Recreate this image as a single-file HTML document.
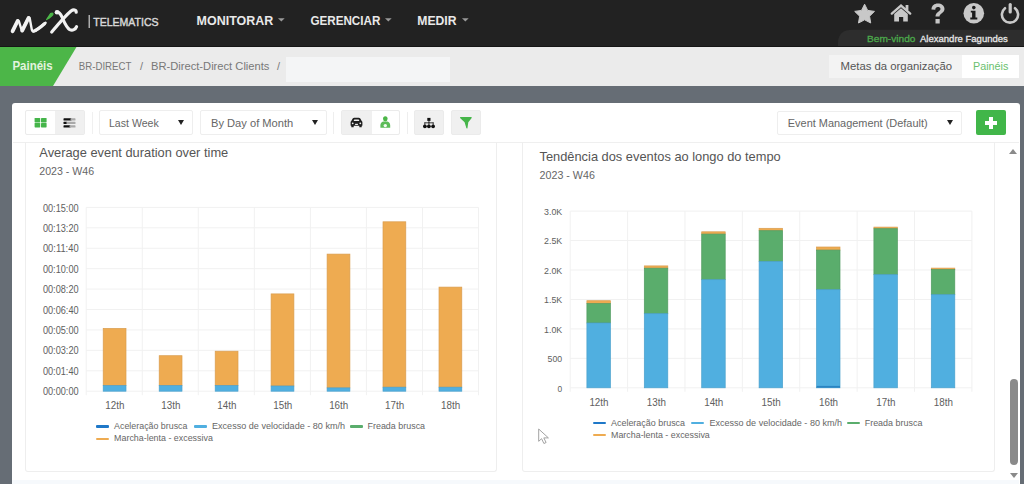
<!DOCTYPE html>
<html><head><meta charset="utf-8">
<style>
*{margin:0;padding:0;box-sizing:border-box}
html,body{width:1024px;height:484px;overflow:hidden;background:#666d75;font-family:"Liberation Sans",sans-serif}
.abs{position:absolute}
.btn{position:absolute;border:1px solid #ebebeb;border-radius:2px}
.dd{position:absolute;background:#fff;border:1px solid #eeeeee;border-radius:2px}
.tri{position:absolute;width:0;height:0;border-left:3.5px solid transparent;border-right:3.5px solid transparent;border-top:5px solid #222}
.mk{position:absolute;height:2.2px;width:13px;border-radius:1px}
svg{position:absolute;overflow:visible}
</style></head><body>
<div class="abs" style="left:0;top:0;width:1024px;height:47px;background:#222222"></div>
<svg style="left:0;top:0" width="180" height="47" viewBox="0 0 180 47">
  <path d="M12.4 31.5 L17.4 21.2 Q18.2 19.8 18.9 21.4 L21.9 31 L28.3 18 Q29.1 16.6 29.7 18.2 L31.8 29.6 Q32.6 32.4 35.5 30.8 L45.6 22.8" fill="none" stroke="#f2f2f2" stroke-width="2.4" stroke-linecap="round" stroke-linejoin="round"/>
  <path d="M12.6 31.2 L17.6 21" fill="none" stroke="#f2f2f2" stroke-width="3.8" stroke-linecap="round"/>
  <path d="M22.2 30.6 L28.5 18" fill="none" stroke="#f2f2f2" stroke-width="3.8" stroke-linecap="round"/>
  <path d="M33.5 31.2 Q37 30.5 44.5 23.8" fill="none" stroke="#f2f2f2" stroke-width="3.2" stroke-linecap="round"/>
  <path d="M46.6 19.6 L50.6 13.6 Q52.6 12.4 53 14 Q52.6 15.8 46.6 19.6 Z" fill="#4cb748" stroke="#4cb748" stroke-width="1.2" stroke-linejoin="round"/>
  <path d="M51.7 32 C58 24.5 65.5 15.5 71 11 C73.5 9.2 76.3 9.6 76.2 12.2" fill="none" stroke="#f2f2f2" stroke-width="3.2" stroke-linecap="round"/>
  <path d="M56.8 12.2 C58.8 11.8 60.6 14 62 17 C64 21.5 66.3 27.5 69.8 29.6 C72.5 31 75.5 29.5 76.6 26.6" fill="none" stroke="#f2f2f2" stroke-width="3.1" stroke-linecap="round"/>
  <circle cx="57" cy="12.3" r="2.3" fill="#f2f2f2"/>
  <rect x="88.6" y="15" width="1.2" height="13" fill="#cfcfcf"/>
</svg>
<svg style="left:0;top:0" width="1024" height="47">
  <path d="M278 18.2 L284.7 18.2 L281.35 21.6 Z" fill="#9a9a9a"/>
  <path d="M385 18.2 L391.7 18.2 L388.35 21.6 Z" fill="#9a9a9a"/>
  <path d="M462 18.2 L468.7 18.2 L465.35 21.6 Z" fill="#9a9a9a"/>
</svg>
<!-- right icons -->
<svg style="left:840px;top:0" width="184" height="47" viewBox="840 0 184 47">
  <path d="M864.60 4.20 L867.66 10.39 L874.49 11.39 L869.55 16.21 L870.71 23.01 L864.60 19.80 L858.49 23.01 L859.65 16.21 L854.71 11.39 L861.54 10.39 Z" fill="#c8c8c8" stroke="#c8c8c8" stroke-width="1" stroke-linejoin="round"/>
  <path d="M891.8 13.6 L901 5.6 L910.2 13.6" fill="none" stroke="#c8c8c8" stroke-width="2.4" stroke-linecap="round" stroke-linejoin="miter"/>
  <rect x="905.6" y="5" width="2.8" height="5.2" fill="#c8c8c8"/>
  <path d="M894.2 14 L901 8.3 L907.8 14 L907.8 21.6 L903.2 21.6 L903.2 17 L899 17 L899 21.6 L894.2 21.6 Z" fill="#c8c8c8"/>
  <path d="M931.5 9.5 C931.5 5.5 934.5 3.5 937.8 3.5 C941.5 3.5 944.5 5.5 944.5 9 C944.5 13 939.5 13.5 939.5 16.5 L935.5 16.5 C935.5 12 940.5 11.5 940.5 9 C940.5 7.5 939.3 7 937.8 7 C936.3 7 935.3 8 935.3 9.8 Z" fill="#c6c6c6"/>
  <rect x="935.5" y="19" width="4.2" height="4.5" fill="#c6c6c6"/>
  <circle cx="973.8" cy="13.3" r="10.3" fill="#c8c8c8"/>
  <circle cx="973.8" cy="7.6" r="1.8" fill="#1a1a1a"/>
  <path d="M970.8 10.8 L975.5 10.8 L975.5 17.4 L977.3 17.4 L977.3 19.5 L970.3 19.5 L970.3 17.4 L972.1 17.4 L972.1 12.6 L970.8 12.6 Z" fill="#1a1a1a"/>
  <path d="M1005 8.2 A8.1 8.1 0 1 0 1015 8.2" fill="none" stroke="#c8c8c8" stroke-width="2.6" stroke-linecap="round"/>
  <rect x="1008.6" y="3" width="3.2" height="10.5" rx="1.5" fill="#c8c8c8"/>
  <path d="M838 47 L838 43 Q838 29.8 853 29.8 L1024 29.8 L1024 47 Z" fill="#2d2d2d"/>
</svg>
<div class="abs" style="left:0;top:45.6px;width:1024px;height:1.5px;background:#161616"></div>
<!-- breadcrumb -->
<div class="abs" style="left:0;top:47px;width:1024px;height:39px;background:#ebebeb"></div>
<svg style="left:0;top:47px" width="80" height="39"><path d="M0 0 L76.5 0 L53 39 L0 39 Z" fill="#4cb648"/></svg>
<div class="abs" style="left:286px;top:57px;width:164px;height:25px;background:#f4f5f6"></div>
<div class="abs" style="left:829px;top:55px;width:133px;height:23px;background:#f3f3f3"></div>
<div class="abs" style="left:962px;top:55px;width:57px;height:23px;background:#ffffff"></div>
<!-- panel -->
<div class="abs" style="left:12px;top:103px;width:1007.5px;height:390px;background:#fff;border-radius:3px"></div>
<!-- toolbar -->
<div class="btn" style="left:25px;top:110px;width:60px;height:25px;background:#fff"></div>
<div class="abs" style="left:55px;top:111px;width:29px;height:23px;background:#f0f0f0"></div>
<svg style="left:0;top:100px" width="100" height="40" viewBox="0 100 100 40">
  <rect x="34.6" y="118" width="5.6" height="4.4" rx="0.6" fill="#45b54a"/><rect x="41" y="118" width="5.6" height="4.4" rx="0.6" fill="#45b54a"/>
  <rect x="34.6" y="123" width="5.6" height="4.4" rx="0.6" fill="#45b54a"/><rect x="41" y="123" width="5.6" height="4.4" rx="0.6" fill="#45b54a"/>
  <rect x="63.5" y="118.3" width="8" height="2.3" rx="0.6" fill="#111"/><rect x="70.5" y="118.3" width="5" height="2.3" rx="0.6" fill="#a9a9a9"/>
  <rect x="63.5" y="121.8" width="3.8" height="2.3" rx="0.6" fill="#111"/><rect x="66.5" y="121.8" width="9" height="2.3" rx="0.6" fill="#a9a9a9"/>
  <rect x="63.5" y="125.3" width="7" height="2.3" rx="0.6" fill="#111"/><rect x="69.5" y="125.3" width="6" height="2.3" rx="0.6" fill="#a9a9a9"/>
</svg>
<div class="dd" style="left:99px;top:110px;width:94px;height:25px"></div>
<div class="tri" style="left:178.2px;top:120.2px"></div>
<div class="dd" style="left:200px;top:110px;width:127px;height:25px"></div>
<div class="tri" style="left:311.8px;top:120.2px"></div>
<div class="abs" style="left:333px;top:112px;width:1px;height:22px;background:#eeeeee"></div>
<div class="btn" style="left:341px;top:110px;width:59px;height:25px;background:#fff"></div>
<div class="abs" style="left:342px;top:111px;width:30px;height:23px;background:#f0f0f0"></div>
<svg style="left:340px;top:105px" width="170" height="35" viewBox="340 105 170 35">
  <g transform="translate(-0.9 0)"><path d="M352.2 121 L353.6 118.6 Q354.2 117.8 355.2 117.8 L357.8 117.8 L359.6 117.8 Q360.6 117.8 361.2 118.6 L362.6 121 Q363.3 121.4 363.3 122.3 L363.3 125.3 Q363.3 125.8 362.8 125.8 L362.6 125.8 L362.6 127.2 L360.2 127.2 L360.2 125.8 L354.6 125.8 L354.6 127.2 L352.2 127.2 L352.2 125.8 L352 125.8 Q351.5 125.8 351.5 125.3 L351.5 122.3 Q351.5 121.4 352.2 121 Z" fill="#1e1e1e"/>
  <path d="M354.5 121 L355.2 119.5 L359.6 119.5 L360.3 121 Z" fill="#f0f0f0"/>
  <circle cx="353.6" cy="123.3" r="0.9" fill="#f0f0f0"/><circle cx="361.2" cy="123.3" r="0.9" fill="#f0f0f0"/>
  <rect x="356" y="123.8" width="2.8" height="1.2" fill="#f0f0f0"/></g>
  <ellipse cx="385.3" cy="118.8" rx="2.3" ry="2.6" fill="#4cb648"/>
  <path d="M383.3 121.6 L387.3 121.6 Q390.2 122.6 390.2 125.5 L390.2 127.8 L380.4 127.8 L380.4 125.5 Q380.4 122.6 383.3 121.6 Z" fill="#5cbc58"/>
  <circle cx="385.3" cy="125.6" r="1.7" fill="#f4fbf3"/>
</svg>
<div class="abs" style="left:92px;top:112px;width:1px;height:22px;background:#f0f0f0"></div>
<div class="abs" style="left:407px;top:112px;width:1px;height:22px;background:#eeeeee"></div>
<div class="btn" style="left:414px;top:110px;width:30px;height:25px;background:#f0f0f0"></div>
<div class="btn" style="left:451px;top:110px;width:30px;height:25px;background:#f0f0f0"></div>
<svg style="left:410px;top:105px" width="80" height="35" viewBox="410 105 80 35">
  <rect x="427.3" y="117.9" width="3.2" height="3" fill="#111"/>
  <rect x="428.5" y="120.5" width="0.9" height="2.5" fill="#222"/>
  <rect x="424.5" y="122.4" width="9" height="0.9" fill="#222"/>
  <rect x="424.4" y="122.4" width="0.9" height="2.5" fill="#222"/><rect x="432.7" y="122.4" width="0.9" height="2.5" fill="#222"/><rect x="428.5" y="122.4" width="0.9" height="2.5" fill="#222"/>
  <circle cx="424.9" cy="126.3" r="1.9" fill="#111"/><circle cx="428.9" cy="126.3" r="1.9" fill="#111"/><circle cx="433.1" cy="126.3" r="1.9" fill="#111"/>
  <path d="M460 117 L471.7 117 L471.5 118.2 L468.3 122.2 L467.4 128.6 L466.4 128.2 L464.6 122.2 L460.3 118.2 Z" fill="#45b549"/>
</svg>
<div class="dd" style="left:777px;top:110.5px;width:185px;height:24.5px"></div>
<div class="tri" style="left:946.8px;top:120.2px"></div>
<div class="abs" style="left:976px;top:110px;width:30px;height:25px;background:#41b649;border-radius:2px"></div>
<div class="abs" style="left:984.9px;top:121.1px;width:12px;height:3.6px;background:#fff"></div>
<div class="abs" style="left:989.1px;top:116.9px;width:3.6px;height:12px;background:#fff"></div>
<div class="abs" style="left:13px;top:141.5px;width:1006px;height:1px;background:#efefef"></div>
<!-- chart panels -->
<div class="abs" style="left:25px;top:142px;width:472px;height:330px;border:1px solid #eeeeee;border-top:none;border-radius:0 0 3px 3px"></div>
<div class="abs" style="left:522px;top:142px;width:472.5px;height:329.5px;border:1px solid #eeeeee;border-top:none;border-radius:0 0 3px 3px"></div>
<svg style="left:0;top:0" width="1024" height="484">
<rect x="86.2" y="206.90" width="392.3" height="1" fill="#f1f1f1"/><rect x="86.2" y="227.32" width="392.3" height="1" fill="#f1f1f1"/><rect x="86.2" y="247.74" width="392.3" height="1" fill="#f1f1f1"/><rect x="86.2" y="268.17" width="392.3" height="1" fill="#f1f1f1"/><rect x="86.2" y="288.59" width="392.3" height="1" fill="#f1f1f1"/><rect x="86.2" y="309.01" width="392.3" height="1" fill="#f1f1f1"/><rect x="86.2" y="329.43" width="392.3" height="1" fill="#f1f1f1"/><rect x="86.2" y="349.86" width="392.3" height="1" fill="#f1f1f1"/><rect x="86.2" y="370.28" width="392.3" height="1" fill="#f1f1f1"/><rect x="86.2" y="390.70" width="392.3" height="1" fill="#f1f1f1"/><rect x="85.70" y="207.4" width="1" height="187.8" fill="#f1f1f1"/><rect x="141.74" y="207.4" width="1" height="187.8" fill="#f1f1f1"/><rect x="197.79" y="207.4" width="1" height="187.8" fill="#f1f1f1"/><rect x="253.83" y="207.4" width="1" height="187.8" fill="#f1f1f1"/><rect x="309.87" y="207.4" width="1" height="187.8" fill="#f1f1f1"/><rect x="365.91" y="207.4" width="1" height="187.8" fill="#f1f1f1"/><rect x="421.96" y="207.4" width="1" height="187.8" fill="#f1f1f1"/><rect x="478.00" y="207.4" width="1" height="187.8" fill="#f1f1f1"/><rect x="103.2" y="328.4" width="22.8" height="57.2" fill="#eeab51" stroke="#d99d4f" stroke-width="0.7"/><rect x="103.2" y="385.6" width="22.8" height="5.6" fill="#50afe0" stroke="#4aa0cc" stroke-width="0.7"/><rect x="159.2" y="355.7" width="22.8" height="29.9" fill="#eeab51" stroke="#d99d4f" stroke-width="0.7"/><rect x="159.2" y="385.6" width="22.8" height="5.6" fill="#50afe0" stroke="#4aa0cc" stroke-width="0.7"/><rect x="215.2" y="351.2" width="22.8" height="34.4" fill="#eeab51" stroke="#d99d4f" stroke-width="0.7"/><rect x="215.2" y="385.6" width="22.8" height="5.6" fill="#50afe0" stroke="#4aa0cc" stroke-width="0.7"/><rect x="271.1" y="293.9" width="22.8" height="92.1" fill="#eeab51" stroke="#d99d4f" stroke-width="0.7"/><rect x="271.1" y="386.0" width="22.8" height="5.2" fill="#50afe0" stroke="#4aa0cc" stroke-width="0.7"/><rect x="327.1" y="254.1" width="22.8" height="133.8" fill="#eeab51" stroke="#d99d4f" stroke-width="0.7"/><rect x="327.1" y="387.9" width="22.8" height="3.3" fill="#50afe0" stroke="#4aa0cc" stroke-width="0.7"/><rect x="383.0" y="221.8" width="22.8" height="165.4" fill="#eeab51" stroke="#d99d4f" stroke-width="0.7"/><rect x="383.0" y="387.2" width="22.8" height="4.0" fill="#50afe0" stroke="#4aa0cc" stroke-width="0.7"/><rect x="439.0" y="287.1" width="22.8" height="100.1" fill="#eeab51" stroke="#d99d4f" stroke-width="0.7"/><rect x="439.0" y="387.2" width="22.8" height="4.0" fill="#50afe0" stroke="#4aa0cc" stroke-width="0.7"/><rect x="570.2" y="210.60" width="401.7" height="1" fill="#f1f1f1"/><rect x="570.2" y="240.05" width="401.7" height="1" fill="#f1f1f1"/><rect x="570.2" y="269.50" width="401.7" height="1" fill="#f1f1f1"/><rect x="570.2" y="298.95" width="401.7" height="1" fill="#f1f1f1"/><rect x="570.2" y="328.40" width="401.7" height="1" fill="#f1f1f1"/><rect x="570.2" y="357.85" width="401.7" height="1" fill="#f1f1f1"/><rect x="570.2" y="387.30" width="401.7" height="1" fill="#f1f1f1"/><rect x="569.70" y="211.1" width="1" height="180.7" fill="#f1f1f1"/><rect x="627.09" y="211.1" width="1" height="180.7" fill="#f1f1f1"/><rect x="684.47" y="211.1" width="1" height="180.7" fill="#f1f1f1"/><rect x="741.86" y="211.1" width="1" height="180.7" fill="#f1f1f1"/><rect x="799.24" y="211.1" width="1" height="180.7" fill="#f1f1f1"/><rect x="856.63" y="211.1" width="1" height="180.7" fill="#f1f1f1"/><rect x="914.01" y="211.1" width="1" height="180.7" fill="#f1f1f1"/><rect x="971.40" y="211.1" width="1" height="180.7" fill="#f1f1f1"/><rect x="586.9" y="300.7" width="23.5" height="2.9" fill="#eeab51" stroke="#d99d4f" stroke-width="0.7"/><rect x="586.9" y="303.6" width="23.5" height="19.4" fill="#5aad6c" stroke="#519c61" stroke-width="0.7"/><rect x="586.9" y="323.0" width="23.5" height="64.8" fill="#50afe0" stroke="#4aa0cc" stroke-width="0.7"/><rect x="644.3" y="265.9" width="23.5" height="2.3" fill="#eeab51" stroke="#d99d4f" stroke-width="0.7"/><rect x="644.3" y="268.2" width="23.5" height="45.5" fill="#5aad6c" stroke="#519c61" stroke-width="0.7"/><rect x="644.3" y="313.7" width="23.5" height="74.1" fill="#50afe0" stroke="#4aa0cc" stroke-width="0.7"/><rect x="701.7" y="231.8" width="23.5" height="2.3" fill="#eeab51" stroke="#d99d4f" stroke-width="0.7"/><rect x="701.7" y="234.1" width="23.5" height="45.6" fill="#5aad6c" stroke="#519c61" stroke-width="0.7"/><rect x="701.7" y="279.7" width="23.5" height="108.1" fill="#50afe0" stroke="#4aa0cc" stroke-width="0.7"/><rect x="759.1" y="228.3" width="23.5" height="2.4" fill="#eeab51" stroke="#d99d4f" stroke-width="0.7"/><rect x="759.1" y="230.7" width="23.5" height="30.8" fill="#5aad6c" stroke="#519c61" stroke-width="0.7"/><rect x="759.1" y="261.5" width="23.5" height="126.3" fill="#50afe0" stroke="#4aa0cc" stroke-width="0.7"/><rect x="816.5" y="247.0" width="23.5" height="3.1" fill="#eeab51" stroke="#d99d4f" stroke-width="0.7"/><rect x="816.5" y="250.1" width="23.5" height="39.6" fill="#5aad6c" stroke="#519c61" stroke-width="0.7"/><rect x="816.5" y="289.7" width="23.5" height="98.1" fill="#50afe0" stroke="#4aa0cc" stroke-width="0.7"/><rect x="873.9" y="227.1" width="23.5" height="1.6" fill="#eeab51" stroke="#d99d4f" stroke-width="0.7"/><rect x="873.9" y="228.7" width="23.5" height="46.0" fill="#5aad6c" stroke="#519c61" stroke-width="0.7"/><rect x="873.9" y="274.7" width="23.5" height="113.1" fill="#50afe0" stroke="#4aa0cc" stroke-width="0.7"/><rect x="931.3" y="268.1" width="23.5" height="1.5" fill="#eeab51" stroke="#d99d4f" stroke-width="0.7"/><rect x="931.3" y="269.6" width="23.5" height="25.1" fill="#5aad6c" stroke="#519c61" stroke-width="0.7"/><rect x="931.3" y="294.7" width="23.5" height="93.1" fill="#50afe0" stroke="#4aa0cc" stroke-width="0.7"/><rect x="816.7" y="385.9" width="23.3" height="1.8" fill="#2a84c2"/>
</svg>
<div class="mk" style="left:95.7px;top:425.4px;background:#1f78c8"></div>
<div class="mk" style="left:194px;top:425.4px;background:#50afe0"></div>
<div class="mk" style="left:350px;top:425.4px;background:#5aad6c"></div>
<div class="mk" style="left:95.7px;top:437.8px;background:#eeab51"></div>
<div class="mk" style="left:592.9px;top:421.6px;background:#1f78c8"></div>
<div class="mk" style="left:691.4px;top:421.6px;background:#50afe0"></div>
<div class="mk" style="left:846.5px;top:421.6px;background:#5aad6c"></div>
<div class="mk" style="left:592.9px;top:434.2px;background:#eeab51"></div>
<svg style="left:0;top:0" width="1024" height="484" font-family="Liberation Sans">
<text x="196.60" y="24.5" font-size="13.3" font-weight="bold" fill="#e9e9e9" textLength="76.63" lengthAdjust="spacingAndGlyphs">MONITORAR</text><text x="310.40" y="24.5" font-size="13.3" font-weight="bold" fill="#e9e9e9" textLength="69.95" lengthAdjust="spacingAndGlyphs">GERENCIAR</text><text x="417.30" y="24.5" font-size="13.3" font-weight="bold" fill="#e9e9e9" textLength="39.24" lengthAdjust="spacingAndGlyphs">MEDIR</text><text x="93.20" y="25.6" font-size="11.8" stroke="#d8d8d8" stroke-width="0.45" fill="#d8d8d8" textLength="65.48" lengthAdjust="spacingAndGlyphs">TELEMATICS</text><text x="867.00" y="41.7" font-size="9.7" stroke="#4caa4c" stroke-width="0.3" fill="#4caa4c" textLength="48.41" lengthAdjust="spacingAndGlyphs">Bem-vindo</text><text x="920.00" y="41.7" font-size="9.7" stroke="#e6e6e6" stroke-width="0.3" fill="#e6e6e6" textLength="87.85" lengthAdjust="spacingAndGlyphs">Alexandre Fagundes</text><text x="12.40" y="69.7" font-size="12.2" font-weight="bold" fill="#e3f3df" textLength="40.29" lengthAdjust="spacingAndGlyphs">Painéis</text><text x="78.75" y="69.7" font-size="10.9" fill="#787878" textLength="52.69" lengthAdjust="spacingAndGlyphs">BR-DIRECT</text><text x="140.00" y="69.7" font-size="10.9" fill="#787878" textLength="3.03" lengthAdjust="spacingAndGlyphs">/</text><text x="151.00" y="69.7" font-size="10.9" fill="#787878" textLength="118.43" lengthAdjust="spacingAndGlyphs">BR-Direct-Direct Clients</text><text x="277.00" y="69.7" font-size="10.9" fill="#787878" textLength="3.03" lengthAdjust="spacingAndGlyphs">/</text><text x="840.50" y="70.3" font-size="10.8" fill="#555555" textLength="111.50" lengthAdjust="spacingAndGlyphs">Metas da organização</text><text x="973.00" y="70.3" font-size="10.8" fill="#6abf6e" textLength="35.40" lengthAdjust="spacingAndGlyphs">Painéis</text><text x="109.00" y="127" font-size="11.3" fill="#666666" textLength="49.67" lengthAdjust="spacingAndGlyphs">Last Week</text><text x="211.00" y="127" font-size="11.3" fill="#666666" textLength="82.28" lengthAdjust="spacingAndGlyphs">By Day of Month</text><text x="787.80" y="127.3" font-size="11.3" fill="#666666" textLength="139.77" lengthAdjust="spacingAndGlyphs">Event Management (Default)</text><text x="39.30" y="157.1" font-size="13" fill="#555555" textLength="188.93" lengthAdjust="spacingAndGlyphs">Average event duration over time</text><text x="39.30" y="175.2" font-size="10.5" fill="#666666" textLength="54.84" lengthAdjust="spacingAndGlyphs">2023 - W46</text><text x="539.50" y="161" font-size="13" fill="#555555" textLength="241.23" lengthAdjust="spacingAndGlyphs">Tendência dos eventos ao longo do tempo</text><text x="539.60" y="179.3" font-size="10.5" fill="#666666" textLength="55.24" lengthAdjust="spacingAndGlyphs">2023 - W46</text><text x="114.10" y="428.7" font-size="9.1" fill="#666666" textLength="73.38" lengthAdjust="spacingAndGlyphs">Aceleração brusca</text><text x="212.00" y="428.7" font-size="9.1" fill="#666666" textLength="133.06" lengthAdjust="spacingAndGlyphs">Excesso de velocidade - 80 km/h</text><text x="367.50" y="428.7" font-size="9.1" fill="#666666" textLength="57.57" lengthAdjust="spacingAndGlyphs">Freada brusca</text><text x="114.10" y="441.3" font-size="9.1" fill="#666666" textLength="98.78" lengthAdjust="spacingAndGlyphs">Marcha-lenta - excessiva</text><text x="611.00" y="425.9" font-size="9.1" fill="#666666" textLength="74.07" lengthAdjust="spacingAndGlyphs">Aceleração brusca</text><text x="709.40" y="425.9" font-size="9.1" fill="#666666" textLength="132.66" lengthAdjust="spacingAndGlyphs">Excesso de velocidade - 80 km/h</text><text x="864.70" y="425.9" font-size="9.1" fill="#666666" textLength="57.67" lengthAdjust="spacingAndGlyphs">Freada brusca</text><text x="611.00" y="438.2" font-size="9.1" fill="#666666" textLength="98.78" lengthAdjust="spacingAndGlyphs">Marcha-lenta - excessiva</text><text x="42.90" y="211.5" font-size="10.2" fill="#606060" textLength="35.70" lengthAdjust="spacingAndGlyphs">00:15:00</text><text x="42.90" y="231.92" font-size="10.2" fill="#606060" textLength="35.70" lengthAdjust="spacingAndGlyphs">00:13:20</text><text x="42.90" y="252.34" font-size="10.2" fill="#606060" textLength="35.69" lengthAdjust="spacingAndGlyphs">00:11:40</text><text x="42.90" y="272.77" font-size="10.2" fill="#606060" textLength="35.70" lengthAdjust="spacingAndGlyphs">00:10:00</text><text x="42.90" y="293.19" font-size="10.2" fill="#606060" textLength="35.70" lengthAdjust="spacingAndGlyphs">00:08:20</text><text x="42.90" y="313.61" font-size="10.2" fill="#606060" textLength="35.70" lengthAdjust="spacingAndGlyphs">00:06:40</text><text x="42.90" y="334.03" font-size="10.2" fill="#606060" textLength="35.70" lengthAdjust="spacingAndGlyphs">00:05:00</text><text x="42.90" y="354.46" font-size="10.2" fill="#606060" textLength="35.70" lengthAdjust="spacingAndGlyphs">00:03:20</text><text x="42.90" y="374.88" font-size="10.2" fill="#606060" textLength="35.70" lengthAdjust="spacingAndGlyphs">00:01:40</text><text x="42.90" y="395.3" font-size="10.2" fill="#606060" textLength="35.70" lengthAdjust="spacingAndGlyphs">00:00:00</text><text x="105.35" y="408.9" font-size="10" fill="#606060" textLength="19.15" lengthAdjust="spacingAndGlyphs">12th</text><text x="161.30" y="408.9" font-size="10" fill="#606060" textLength="19.15" lengthAdjust="spacingAndGlyphs">13th</text><text x="217.25" y="408.9" font-size="10" fill="#606060" textLength="19.15" lengthAdjust="spacingAndGlyphs">14th</text><text x="273.20" y="408.9" font-size="10" fill="#606060" textLength="19.15" lengthAdjust="spacingAndGlyphs">15th</text><text x="329.15" y="408.9" font-size="10" fill="#606060" textLength="19.15" lengthAdjust="spacingAndGlyphs">16th</text><text x="385.10" y="408.9" font-size="10" fill="#606060" textLength="19.15" lengthAdjust="spacingAndGlyphs">17th</text><text x="441.05" y="408.9" font-size="10" fill="#606060" textLength="19.15" lengthAdjust="spacingAndGlyphs">18th</text><text x="544.00" y="214.8" font-size="9.9" fill="#606060" textLength="18.23" lengthAdjust="spacingAndGlyphs">3.0K</text><text x="544.00" y="244.25" font-size="9.9" fill="#606060" textLength="18.23" lengthAdjust="spacingAndGlyphs">2.5K</text><text x="544.00" y="273.7" font-size="9.9" fill="#606060" textLength="18.23" lengthAdjust="spacingAndGlyphs">2.0K</text><text x="544.00" y="303.15" font-size="9.9" fill="#606060" textLength="18.23" lengthAdjust="spacingAndGlyphs">1.5K</text><text x="544.00" y="332.6" font-size="9.9" fill="#606060" textLength="18.23" lengthAdjust="spacingAndGlyphs">1.0K</text><text x="547.60" y="362.05" font-size="9.9" fill="#606060" textLength="14.55" lengthAdjust="spacingAndGlyphs">500</text><text x="557.50" y="391.5" font-size="9.9" fill="#606060" textLength="4.67" lengthAdjust="spacingAndGlyphs">0</text><text x="589.39" y="405.9" font-size="10" fill="#606060" textLength="19.15" lengthAdjust="spacingAndGlyphs">12th</text><text x="646.78" y="405.9" font-size="10" fill="#606060" textLength="19.15" lengthAdjust="spacingAndGlyphs">13th</text><text x="704.16" y="405.9" font-size="10" fill="#606060" textLength="19.15" lengthAdjust="spacingAndGlyphs">14th</text><text x="761.55" y="405.9" font-size="10" fill="#606060" textLength="19.15" lengthAdjust="spacingAndGlyphs">15th</text><text x="818.94" y="405.9" font-size="10" fill="#606060" textLength="19.15" lengthAdjust="spacingAndGlyphs">16th</text><text x="876.32" y="405.9" font-size="10" fill="#606060" textLength="19.15" lengthAdjust="spacingAndGlyphs">17th</text><text x="933.71" y="405.9" font-size="10" fill="#606060" textLength="19.15" lengthAdjust="spacingAndGlyphs">18th</text>
</svg>
<div class="abs" style="left:12px;top:480px;width:1007px;height:4px;background:#f6f9fc"></div>
<!-- scrollbar -->
<div class="abs" style="left:1009px;top:149.2px;width:0;height:0;border-left:4px solid transparent;border-right:4px solid transparent;border-bottom:5px solid #8a8a8a"></div>
<div class="abs" style="left:1009.5px;top:378.5px;width:8px;height:86.5px;background:#8a8a8a;border-radius:4px"></div>
<div class="abs" style="left:1009.5px;top:473px;width:0;height:0;border-left:4.5px solid transparent;border-right:4.5px solid transparent;border-top:5.5px solid #8a8a8a"></div>
<!-- cursor -->
<svg style="left:0;top:0" width="1024" height="484">
  <path d="M538.7 429 L538.7 441.3 L541.6 438.7 L543.9 443.5 L546.1 442.5 L543.8 437.9 L548.4 437.9 Z" fill="#fff" stroke="#999" stroke-width="0.9" stroke-linejoin="round"/>
</svg>
</body></html>
